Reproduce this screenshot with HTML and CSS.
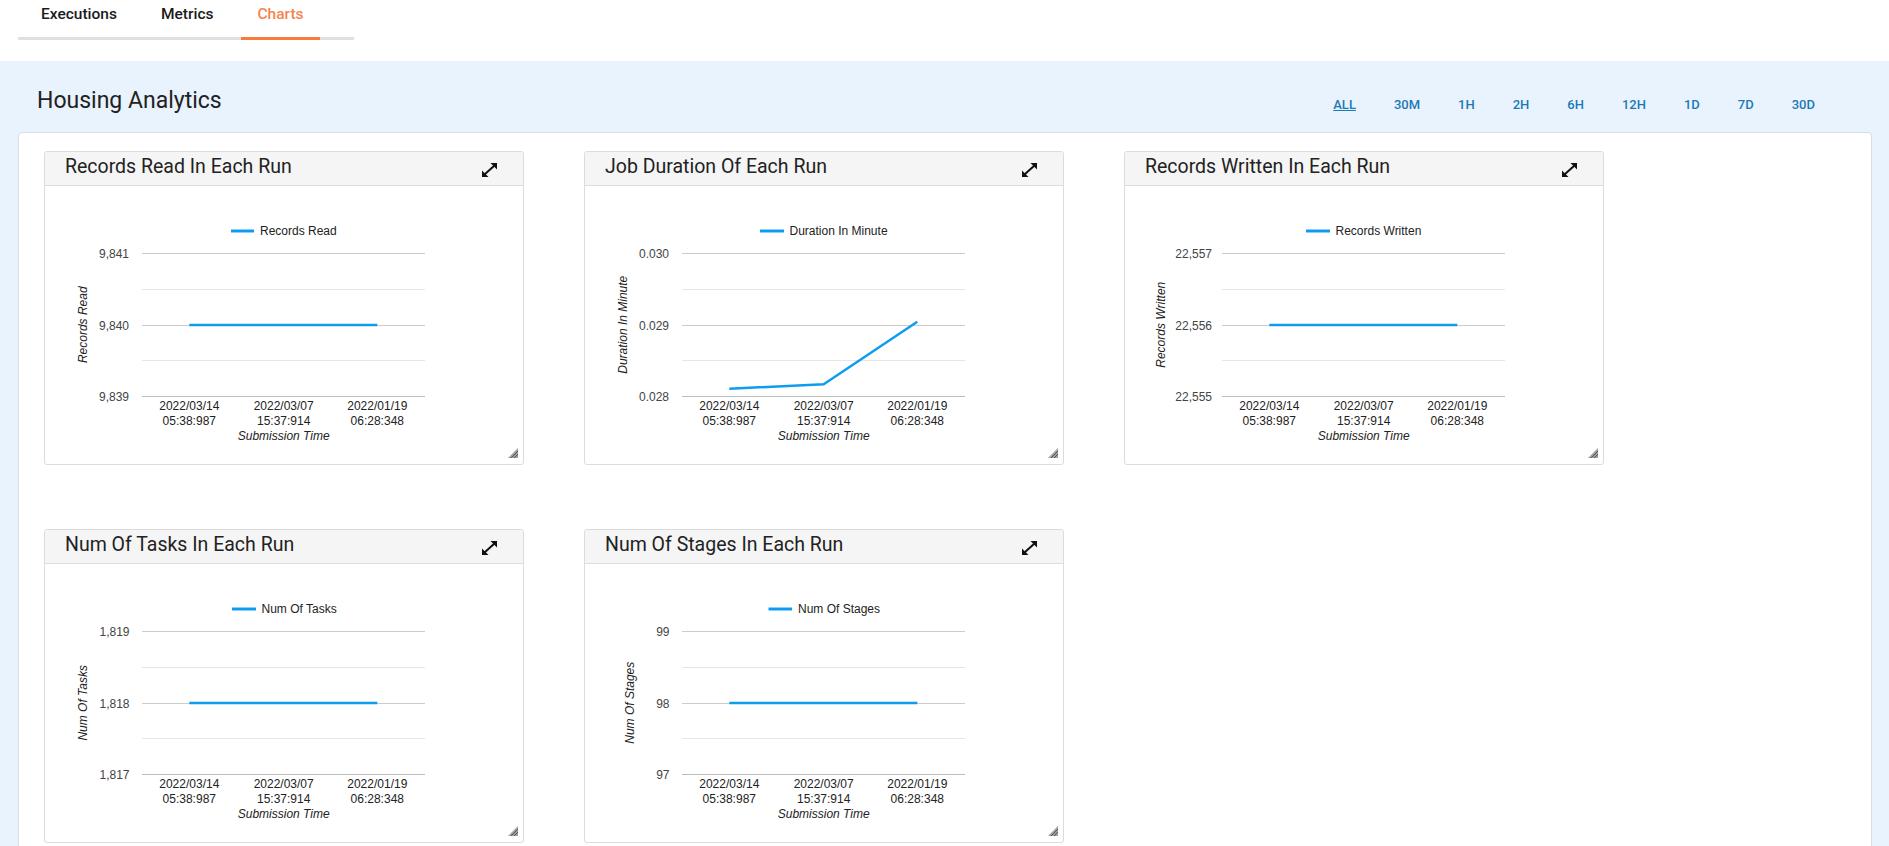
FILE: index.html
```html
<!DOCTYPE html>
<html lang="en">
<head>
<meta charset="utf-8">
<title>Housing Analytics - Charts</title>
<link rel="stylesheet" href="styles.css">
</head>
<body>
<nav class="tabs">
  <a class="tab">Executions</a>
  <a class="tab">Metrics</a>
  <a class="tab active">Charts</a>
</nav>

<section class="analytics">
  <div class="analytics-head">
    <h2 class="analytics-title">Housing Analytics</h2>
    <div class="filters">
      <a class="filter selected">ALL</a>
      <a class="filter">30M</a>
      <a class="filter">1H</a>
      <a class="filter">2H</a>
      <a class="filter">6H</a>
      <a class="filter">12H</a>
      <a class="filter">1D</a>
      <a class="filter">7D</a>
      <a class="filter">30D</a>
    </div>
  </div>

  <div class="panel">
    <!-- Card 1 -->
    <div class="card">
      <div class="card-head">
        <h3 class="card-title">Records Read In Each Run</h3>
        <svg class="expand" width="15" height="14" viewBox="0 0 15 14"><path d="M15 0 L15 6.5 L8.5 0 Z M0 14 L0 7.5 L6.5 14 Z"/><line x1="2.5" y1="11.5" x2="12.5" y2="2.5"/></svg>
      </div>
      <div class="card-body">
        <svg class="chart" width="478" height="278" viewBox="0 0 478 278">
          <line class="series" x1="186" y1="45" x2="209" y2="45"/>
          <text class="legend" x="215" y="49">Records Read</text>
          <line class="grid major" x1="97" x2="380" y1="67.5" y2="67.5"/>
          <line class="grid minor" x1="97" x2="380" y1="103.5" y2="103.5"/>
          <line class="grid major" x1="97" x2="380" y1="139.5" y2="139.5"/>
          <line class="grid minor" x1="97" x2="380" y1="174.5" y2="174.5"/>
          <line class="grid base" x1="97" x2="380" y1="210.5" y2="210.5"/>
          <text class="ylabel" x="84" y="71.5">9,841</text>
          <text class="ylabel" x="84" y="143.5">9,840</text>
          <text class="ylabel" x="84" y="214.5">9,839</text>
          <text class="ytitle" x="42" y="138.75" transform="rotate(-90 42 138.75)">Records Read</text>
          <polyline class="data" points="144.3,139 238.7,139 332.3,139"/>
          <text class="xlabel" x="144.3" y="224">2022/03/14</text>
          <text class="xlabel" x="144.3" y="238.5">05:38:987</text>
          <text class="xlabel" x="238.7" y="224">2022/03/07</text>
          <text class="xlabel" x="238.7" y="238.5">15:37:914</text>
          <text class="xlabel" x="332.3" y="224">2022/01/19</text>
          <text class="xlabel" x="332.3" y="238.5">06:28:348</text>
          <text class="xtitle" x="238.7" y="253.5">Submission Time</text>
        </svg>
      </div>
      <svg class="resize" width="10" height="10" viewBox="0 0 10 10"><path d="M10 0 L10 10 L0 10 Z"/><line x1="3" y1="10" x2="10" y2="3"/><line x1="6" y1="10" x2="10" y2="6"/></svg>
    </div>

    <!-- Card 2 -->
    <div class="card">
      <div class="card-head">
        <h3 class="card-title">Job Duration Of Each Run</h3>
        <svg class="expand" width="15" height="14" viewBox="0 0 15 14"><path d="M15 0 L15 6.5 L8.5 0 Z M0 14 L0 7.5 L6.5 14 Z"/><line x1="2.5" y1="11.5" x2="12.5" y2="2.5"/></svg>
      </div>
      <div class="card-body">
        <svg class="chart" width="478" height="278" viewBox="0 0 478 278">
          <line class="series" x1="175" y1="45" x2="199" y2="45"/>
          <text class="legend" x="204.5" y="49">Duration In Minute</text>
          <line class="grid major" x1="97" x2="380" y1="67.5" y2="67.5"/>
          <line class="grid minor" x1="97" x2="380" y1="103.5" y2="103.5"/>
          <line class="grid major" x1="97" x2="380" y1="139.5" y2="139.5"/>
          <line class="grid minor" x1="97" x2="380" y1="174.5" y2="174.5"/>
          <line class="grid base" x1="97" x2="380" y1="210.5" y2="210.5"/>
          <text class="ylabel" x="84" y="71.5">0.030</text>
          <text class="ylabel" x="84" y="143.5">0.029</text>
          <text class="ylabel" x="84" y="214.5">0.028</text>
          <text class="ytitle" x="42" y="138.75" transform="rotate(-90 42 138.75)">Duration In Minute</text>
          <polyline class="data" points="144.3,202.7 238.7,198.3 332.3,135.7"/>
          <text class="xlabel" x="144.3" y="224">2022/03/14</text>
          <text class="xlabel" x="144.3" y="238.5">05:38:987</text>
          <text class="xlabel" x="238.7" y="224">2022/03/07</text>
          <text class="xlabel" x="238.7" y="238.5">15:37:914</text>
          <text class="xlabel" x="332.3" y="224">2022/01/19</text>
          <text class="xlabel" x="332.3" y="238.5">06:28:348</text>
          <text class="xtitle" x="238.7" y="253.5">Submission Time</text>
        </svg>
      </div>
      <svg class="resize" width="10" height="10" viewBox="0 0 10 10"><path d="M10 0 L10 10 L0 10 Z"/><line x1="3" y1="10" x2="10" y2="3"/><line x1="6" y1="10" x2="10" y2="6"/></svg>
    </div>

    <!-- Card 3 -->
    <div class="card">
      <div class="card-head">
        <h3 class="card-title">Records Written In Each Run</h3>
        <svg class="expand" width="15" height="14" viewBox="0 0 15 14"><path d="M15 0 L15 6.5 L8.5 0 Z M0 14 L0 7.5 L6.5 14 Z"/><line x1="2.5" y1="11.5" x2="12.5" y2="2.5"/></svg>
      </div>
      <div class="card-body">
        <svg class="chart" width="478" height="278" viewBox="0 0 478 278">
          <line class="series" x1="181" y1="45" x2="205" y2="45"/>
          <text class="legend" x="210.5" y="49">Records Written</text>
          <line class="grid major" x1="97" x2="380" y1="67.5" y2="67.5"/>
          <line class="grid minor" x1="97" x2="380" y1="103.5" y2="103.5"/>
          <line class="grid major" x1="97" x2="380" y1="139.5" y2="139.5"/>
          <line class="grid minor" x1="97" x2="380" y1="174.5" y2="174.5"/>
          <line class="grid base" x1="97" x2="380" y1="210.5" y2="210.5"/>
          <text class="ylabel" x="87" y="71.5">22,557</text>
          <text class="ylabel" x="87" y="143.5">22,556</text>
          <text class="ylabel" x="87" y="214.5">22,555</text>
          <text class="ytitle" x="40" y="138.75" transform="rotate(-90 40 138.75)">Records Written</text>
          <polyline class="data" points="144.3,139 238.7,139 332.3,139"/>
          <text class="xlabel" x="144.3" y="224">2022/03/14</text>
          <text class="xlabel" x="144.3" y="238.5">05:38:987</text>
          <text class="xlabel" x="238.7" y="224">2022/03/07</text>
          <text class="xlabel" x="238.7" y="238.5">15:37:914</text>
          <text class="xlabel" x="332.3" y="224">2022/01/19</text>
          <text class="xlabel" x="332.3" y="238.5">06:28:348</text>
          <text class="xtitle" x="238.7" y="253.5">Submission Time</text>
        </svg>
      </div>
      <svg class="resize" width="10" height="10" viewBox="0 0 10 10"><path d="M10 0 L10 10 L0 10 Z"/><line x1="3" y1="10" x2="10" y2="3"/><line x1="6" y1="10" x2="10" y2="6"/></svg>
    </div>

    <!-- Card 4 -->
    <div class="card">
      <div class="card-head">
        <h3 class="card-title">Num Of Tasks In Each Run</h3>
        <svg class="expand" width="15" height="14" viewBox="0 0 15 14"><path d="M15 0 L15 6.5 L8.5 0 Z M0 14 L0 7.5 L6.5 14 Z"/><line x1="2.5" y1="11.5" x2="12.5" y2="2.5"/></svg>
      </div>
      <div class="card-body">
        <svg class="chart" width="478" height="278" viewBox="0 0 478 278">
          <line class="series" x1="187" y1="45" x2="211" y2="45"/>
          <text class="legend" x="216.5" y="49">Num Of Tasks</text>
          <line class="grid major" x1="97" x2="380" y1="67.5" y2="67.5"/>
          <line class="grid minor" x1="97" x2="380" y1="103.5" y2="103.5"/>
          <line class="grid major" x1="97" x2="380" y1="139.5" y2="139.5"/>
          <line class="grid minor" x1="97" x2="380" y1="174.5" y2="174.5"/>
          <line class="grid base" x1="97" x2="380" y1="210.5" y2="210.5"/>
          <text class="ylabel" x="84.5" y="71.5">1,819</text>
          <text class="ylabel" x="84.5" y="143.5">1,818</text>
          <text class="ylabel" x="84.5" y="214.5">1,817</text>
          <text class="ytitle" x="42" y="138.75" transform="rotate(-90 42 138.75)">Num Of Tasks</text>
          <polyline class="data" points="144.3,139 238.7,139 332.3,139"/>
          <text class="xlabel" x="144.3" y="224">2022/03/14</text>
          <text class="xlabel" x="144.3" y="238.5">05:38:987</text>
          <text class="xlabel" x="238.7" y="224">2022/03/07</text>
          <text class="xlabel" x="238.7" y="238.5">15:37:914</text>
          <text class="xlabel" x="332.3" y="224">2022/01/19</text>
          <text class="xlabel" x="332.3" y="238.5">06:28:348</text>
          <text class="xtitle" x="238.7" y="253.5">Submission Time</text>
        </svg>
      </div>
      <svg class="resize" width="10" height="10" viewBox="0 0 10 10"><path d="M10 0 L10 10 L0 10 Z"/><line x1="3" y1="10" x2="10" y2="3"/><line x1="6" y1="10" x2="10" y2="6"/></svg>
    </div>

    <!-- Card 5 -->
    <div class="card">
      <div class="card-head">
        <h3 class="card-title">Num Of Stages In Each Run</h3>
        <svg class="expand" width="15" height="14" viewBox="0 0 15 14"><path d="M15 0 L15 6.5 L8.5 0 Z M0 14 L0 7.5 L6.5 14 Z"/><line x1="2.5" y1="11.5" x2="12.5" y2="2.5"/></svg>
      </div>
      <div class="card-body">
        <svg class="chart" width="478" height="278" viewBox="0 0 478 278">
          <line class="series" x1="183.5" y1="45" x2="207" y2="45"/>
          <text class="legend" x="213" y="49">Num Of Stages</text>
          <line class="grid major" x1="97" x2="380" y1="67.5" y2="67.5"/>
          <line class="grid minor" x1="97" x2="380" y1="103.5" y2="103.5"/>
          <line class="grid major" x1="97" x2="380" y1="139.5" y2="139.5"/>
          <line class="grid minor" x1="97" x2="380" y1="174.5" y2="174.5"/>
          <line class="grid base" x1="97" x2="380" y1="210.5" y2="210.5"/>
          <text class="ylabel" x="84.5" y="71.5">99</text>
          <text class="ylabel" x="84.5" y="143.5">98</text>
          <text class="ylabel" x="84.5" y="214.5">97</text>
          <text class="ytitle" x="49" y="138.75" transform="rotate(-90 49 138.75)">Num Of Stages</text>
          <polyline class="data" points="144.3,139 238.7,139 332.3,139"/>
          <text class="xlabel" x="144.3" y="224">2022/03/14</text>
          <text class="xlabel" x="144.3" y="238.5">05:38:987</text>
          <text class="xlabel" x="238.7" y="224">2022/03/07</text>
          <text class="xlabel" x="238.7" y="238.5">15:37:914</text>
          <text class="xlabel" x="332.3" y="224">2022/01/19</text>
          <text class="xlabel" x="332.3" y="238.5">06:28:348</text>
          <text class="xtitle" x="238.7" y="253.5">Submission Time</text>
        </svg>
      </div>
      <svg class="resize" width="10" height="10" viewBox="0 0 10 10"><path d="M10 0 L10 10 L0 10 Z"/><line x1="3" y1="10" x2="10" y2="3"/><line x1="6" y1="10" x2="10" y2="6"/></svg>
    </div>
  </div>
</section>
</body>
</html>
```

FILE: styles.css
```css
html {
  overflow: hidden;
}

body {
  margin: 0;
  background: #ffffff;
  font-family: Roboto, "Liberation Sans", Arial, sans-serif;
  color: #222222;
}

/* ---------- Tabs ---------- */
.tabs {
  display: flex;
  gap: 12px;
  width: 336px;
  margin-left: 18px;
  padding-left: 7px;
  box-sizing: border-box;
  border-bottom: 3px solid #dee1e4;
}

.tab {
  padding: 2px 16px 11px;
  margin-bottom: -3px;
  border-bottom: 3px solid transparent;
  font-size: 15.5px;
  line-height: 24px;
  font-weight: 500;
  color: #1b1b1b;
  cursor: pointer;
}

.tab.active {
  color: #f6844c;
  border-bottom-color: #f47d3b;
}

/* ---------- Analytics section ---------- */
.analytics {
  margin-top: 21px;
  background: #e9f3fd;
  padding: 23px 17px 0 18px;
  height: 900px;
}

.analytics-head {
  display: flex;
  justify-content: space-between;
  align-items: flex-start;
  height: 48px;
}

.analytics-title {
  margin: 3px 0 0 19px;
  font-size: 23px;
  line-height: 27px;
  font-weight: 400;
  color: #222222;
}

.filters {
  display: flex;
  gap: 38px;
  margin-top: 13px;
  margin-right: 57px;
}

.filter {
  font-size: 13px;
  line-height: 16px;
  font-weight: 500;
  color: #1c79b6;
  cursor: pointer;
}

.filter.selected {
  text-decoration: underline;
}

/* ---------- Panel & cards ---------- */
.panel {
  background: #ffffff;
  border: 1px solid #dadde1;
  border-radius: 4px;
  padding: 18px 25px 40px;
  display: grid;
  grid-template-columns: repeat(3, 480px);
  column-gap: 60px;
  row-gap: 64px;
  align-content: start;
}

.card {
  position: relative;
  height: 314px;
  box-sizing: border-box;
  border: 1px solid #dcdcdc;
  border-radius: 3px;
  background: #ffffff;
  display: flex;
  flex-direction: column;
}

.card-head {
  flex: none;
  height: 33px;
  background: #f5f5f5;
  border-bottom: 1px solid #dddddd;
  border-radius: 3px 3px 0 0;
  display: flex;
  align-items: center;
  justify-content: space-between;
  padding: 0 26px 0 20px;
}

.card-title {
  margin: 0 0 4px;
  font-size: 19.5px;
  line-height: 24px;
  font-weight: 400;
  color: #222222;
}

.expand {
  display: block;
  margin-top: 2px;
}

.expand path {
  fill: #111111;
}

.expand line {
  stroke: #111111;
  stroke-width: 2;
}

.card-body {
  flex: 1;
}

.chart {
  display: block;
}

.resize {
  position: absolute;
  right: 5px;
  bottom: 6px;
}

.resize path {
  fill: #a0a0a0;
}

.resize line {
  stroke: #555555;
  stroke-width: 1;
}

/* ---------- Chart internals ---------- */
.chart text {
  font-family: "Liberation Sans", Arial, sans-serif;
  font-size: 12px;
  fill: #222222;
}

.chart .legend {
  fill: #222222;
}

.chart .ylabel {
  text-anchor: end;
  fill: #444444;
}

.chart .xlabel {
  text-anchor: middle;
  fill: #222222;
}

.chart .xtitle,
.chart .ytitle {
  text-anchor: middle;
  font-style: italic;
  fill: #222222;
}

.chart .series {
  stroke: #0e9cf1;
  stroke-width: 3;
}

.chart .data {
  fill: none;
  stroke: #0e9cf1;
  stroke-width: 2.5;
  stroke-linejoin: round;
}

.chart .grid {
  stroke-width: 1;
}

.chart .grid.major {
  stroke: #cccccc;
}

.chart .grid.minor {
  stroke: #e6e6e6;
}

.chart .grid.base {
  stroke: #bdbdbd;
}
```
